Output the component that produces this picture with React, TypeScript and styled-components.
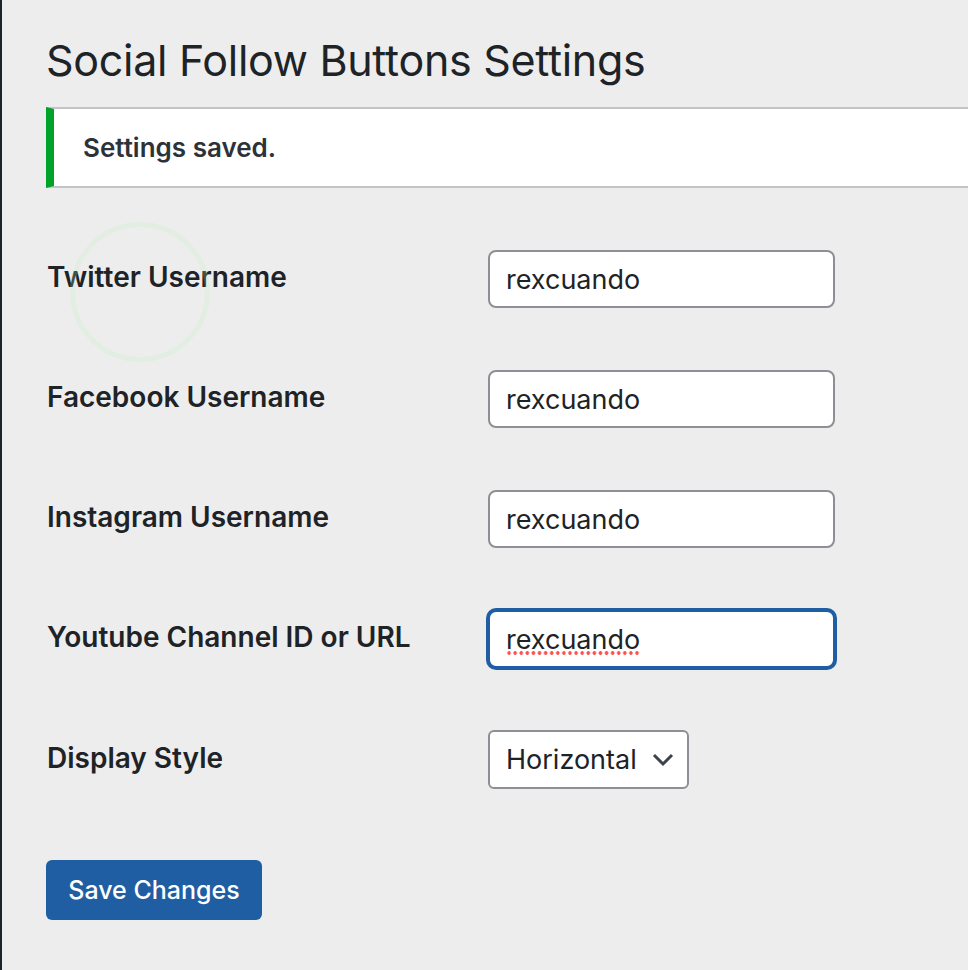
import React from "react";
import styled, { createGlobalStyle } from "styled-components";

const Global = createGlobalStyle`
  html, body { margin: 0; padding: 0; background: #ededed; }
  body { font-family: Inter, "Noto Sans", "Liberation Sans", sans-serif; color: #1d2327; }
  * { box-sizing: border-box; }
`;

const Page = styled.div`
  position: relative;
  min-height: 970px;
  border-left: 2px solid #1d2327;
  padding: 0 0 0 44px;
  overflow: hidden;
`;

const Title = styled.h1`
  margin: 0;
  padding-top: 30px;
  font-size: 43px;
  line-height: 60px;
  font-weight: 400;
  letter-spacing: -0.3px;
  color: #1d2327;
`;

const Notice = styled.div`
  margin-top: 17px;
  margin-right: -4px;
  height: 81px;
  background: #fff;
  border-left: 8px solid #00a32a;
  border-top: 2px solid #c3c4c7;
  border-bottom: 2px solid #c3c4c7;
  display: flex;
  align-items: center;
  padding-left: 29px;
`;

const NoticeText = styled.p`
  margin: 0;
  font-size: 26px;
  font-weight: 600;
  color: #2c3338;
`;

const FormTable = styled.div`
  margin-top: 31px;
  display: grid;
  grid-template-columns: 442px 1fr;
`;

const Row = styled.div`
  display: contents;
`;

const Label = styled.label`
  display: flex;
  align-items: center;
  padding: 31px 0 31px 1px;
  font-size: 28px;
  font-weight: 600;
  color: #1d2327;
  transform: translateY(-2px);
`;

const Cell = styled.div`
  display: flex;
  align-items: center;
  padding: 31px 0;
`;

const InputWrap = styled.div`
  position: relative;
`;

const TextInput = styled.input<{ $focused?: boolean }>`
  display: block;
  width: 347px;
  height: 58px;
  border: 2px solid ${(p) => (p.$focused ? "#1f5ea3" : "#8c8f94")};
  box-shadow: ${(p) => (p.$focused ? "0 0 0 2px #1f5ea3" : "none")};
  border-radius: 8px;
  background: #fff;
  padding: 0 16px;
  font-family: inherit;
  font-size: 27px;
  color: #1d2327;
  outline: none;
`;

const SpellDots = styled.span`
  position: absolute;
  left: 18px;
  top: 41px;
  width: 134px;
  height: 4px;
  background-image: radial-gradient(circle, #ff4f4f 1.6px, transparent 2px);
  background-size: 6.1px 4px;
  pointer-events: none;
`;

const SelectBox = styled.div`
  width: 201px;
  height: 59px;
  border: 2px solid #8c8f94;
  border-radius: 6px;
  background: #fff;
  display: flex;
  align-items: center;
  justify-content: space-between;
  padding: 0 12px 0 16px;
  font-size: 27px;
  color: #1d2327;
`;

const Chevron = styled.svg`
  width: 24px;
  height: 16px;
  flex: none;
`;

const SaveButton = styled.button`
  margin-top: 40px;
  width: 216px;
  height: 60px;
  border: none;
  border-radius: 6px;
  background: #1f5ea3;
  color: #fff;
  font-family: inherit;
  font-size: 25px;
  font-weight: 500;
  cursor: pointer;
`;

const Ripple = styled.div`
  position: absolute;
  left: 68px;
  top: 222px;
  width: 140px;
  height: 140px;
  border-radius: 50%;
  border: 5px solid rgba(190, 240, 190, 0.22);
  pointer-events: none;
`;

const fields = [
  { label: "Twitter Username", value: "rexcuando" },
  { label: "Facebook Username", value: "rexcuando" },
  { label: "Instagram Username", value: "rexcuando" },
  { label: "Youtube Channel ID or URL", value: "rexcuando", focused: true },
];

export default function App() {
  return (
    <>
      <Global />
      <Page>
        <Title>Social Follow Buttons Settings</Title>
        <Notice>
          <NoticeText>Settings saved.</NoticeText>
        </Notice>
        <FormTable>
          {fields.map((f) => (
            <Row key={f.label}>
              <Label>{f.label}</Label>
              <Cell>
                <InputWrap>
                  <TextInput $focused={f.focused} defaultValue={f.value} spellCheck={false} />
                  {f.focused && <SpellDots />}
                </InputWrap>
              </Cell>
            </Row>
          ))}
          <Row>
            <Label>Display Style</Label>
            <Cell>
              <SelectBox>
                <span>Horizontal</span>
                <Chevron viewBox="0 0 24 16">
                  <polyline points="3,3 12,12 21,3" fill="none" stroke="#3c434a" strokeWidth="3" />
                </Chevron>
              </SelectBox>
            </Cell>
          </Row>
        </FormTable>
        <SaveButton>Save Changes</SaveButton>
        <Ripple />
      </Page>
    </>
  );
}
